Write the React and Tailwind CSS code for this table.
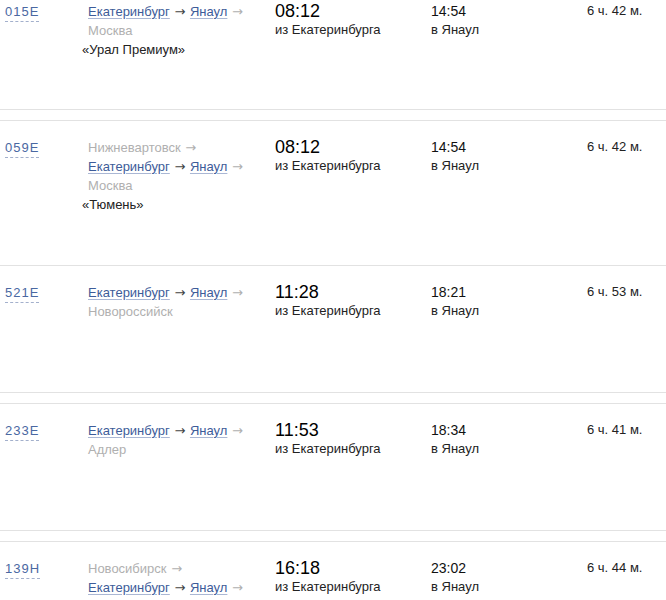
import React from 'react';

const trains = [
  {
    num: '015E',
    before: [],
    after: ['Москва'],
    name: '«Урал Премиум»',
    dep: '08:12',
    arr: '14:54',
    dur: '6 ч. 42 м.',
    h: 'h-[110px] pt-[2px]',
    spacer: true,
  },
  {
    num: '059E',
    before: ['Нижневартовск'],
    after: ['Москва'],
    name: '«Тюмень»',
    dep: '08:12',
    arr: '14:54',
    dur: '6 ч. 42 м.',
    h: 'h-[145px] pt-[17px]',
    spacer: false,
  },
  {
    num: '521E',
    before: [],
    after: ['Новороссийск'],
    name: null,
    dep: '11:28',
    arr: '18:21',
    dur: '6 ч. 53 м.',
    h: 'h-[127px] pt-[17px]',
    spacer: true,
  },
  {
    num: '233E',
    before: [],
    after: ['Адлер'],
    name: null,
    dep: '11:53',
    arr: '18:34',
    dur: '6 ч. 41 м.',
    h: 'h-[127px] pt-[17px]',
    spacer: true,
  },
  {
    num: '139H',
    before: ['Новосибирск'],
    after: ['Москва'],
    name: null,
    dep: '16:18',
    arr: '23:02',
    dur: '6 ч. 44 м.',
    h: 'h-[127px] pt-[17px]',
    spacer: false,
  },
];

const Arrow = () => (
  <span className="mx-[1px] font-['DejaVu_Sans',sans-serif] text-[13px] leading-none">→</span>
);

const CityLink = ({ children }) => (
  <a href="#" className="text-[#3d5c99] underline decoration-[#aab7d4] underline-offset-[2px]">
    {children}
  </a>
);

const Route = ({ before, after }) => (
  <div className="w-[182px] pl-[6px] leading-[19px]">
    {before.map((c) => (
      <span key={c} className="text-[#b0b0b0]">{c} <Arrow /> </span>
    ))}
    <CityLink>Екатеринбург</CityLink>
    <span className="text-[#444]"> <Arrow /> </span>
    <CityLink>Янаул</CityLink>
    {after.map((c) => (
      <span key={c} className="text-[#b0b0b0]"> <Arrow /> {c}</span>
    ))}
  </div>
);

const Row = ({ t }) => (
  <>
    <div className={`flex border-b border-[#e2e2e2] ${t.h}`}>
      <div className="w-[82px] pl-[5px] leading-[19px]">
        <a href="#" className="inline-block text-[#4a68a2] tracking-[1px] leading-[18px] border-b border-dashed border-[#a3b0cc]">
          {t.num}
        </a>
      </div>
      <div className="w-[193px]">
        <Route before={t.before} after={t.after} />
        {t.name && <div className="leading-[19px] text-[#222]">{t.name}</div>}
      </div>
      <div className="w-[156px]">
        <div className="text-[18px] leading-[18px] text-black">{t.dep}</div>
        <div className="leading-[19px] text-[#222]">из Екатеринбурга</div>
      </div>
      <div className="w-[156px]">
        <div className="text-[14px] leading-[18px] text-[#111]">{t.arr}</div>
        <div className="leading-[19px] text-[#222]">в Янаул</div>
      </div>
      <div className="flex-1 leading-[18px] text-[#222]">{t.dur}</div>
    </div>
    {t.spacer && <div className="h-[11px] border-b border-[#e2e2e2]" />}
  </>
);

export default function App() {
  return (
    <div className="w-[666px] h-[600px] overflow-hidden bg-white text-[13px] font-['Liberation_Sans',Arial,sans-serif]">
      {trains.map((t) => (
        <Row key={t.num} t={t} />
      ))}
    </div>
  );
}
